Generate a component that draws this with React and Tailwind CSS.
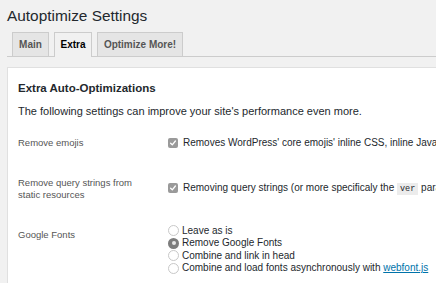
import React from "react";

const Check = () => (
  <span className="inline-flex w-[10px] h-[10px] rounded-[2px] bg-[#9a9a9a] items-center justify-center shrink-0">
    <svg width="8" height="8" viewBox="0 0 8 8">
      <path d="M1.6 4.2 L3.3 5.8 L6.4 2" stroke="white" strokeWidth="1.3" fill="none" strokeLinecap="round" strokeLinejoin="round" />
    </svg>
  </span>
);

const Radio = ({ on }) =>
  on ? (
    <span className="inline-flex w-[11px] h-[11px] rounded-full bg-[#7d7d7d] items-center justify-center shrink-0">
      <span className="w-[4px] h-[4px] rounded-full bg-[#e8e8e8]" />
    </span>
  ) : (
    <span className="inline-block w-[11px] h-[11px] rounded-full border border-[#c8c8c8] bg-white shrink-0" />
  );

export default function App() {
  return (
    <div
      className="w-[436px] h-[283px] overflow-hidden bg-[#f1f1f1] text-[#23282d]"
      style={{ fontFamily: '"Liberation Sans", Arial, sans-serif' }}
    >
      <div className="pl-[7px] pt-[7px] text-[15.4px] leading-[16px] h-[24px] flex items-center">Autoptimize Settings</div>
      <div className="mt-[8px] ml-[7px] pl-[5px] flex gap-[5px] border-b border-[#cccccc] h-[25px] items-end">
        <div className="h-[24px] w-[37px] border border-b-0 border-[#cccccc] bg-[#e5e5e5] text-[#555] text-[10px] font-bold flex items-center justify-center">Main</div>
        <div className="h-[25px] w-[38px] border border-b-0 border-[#cccccc] bg-[#f1f1f1] text-black text-[10px] font-bold flex items-center justify-center -mb-[1px] pb-[1px]">Extra</div>
        <div className="h-[24px] w-[86px] border border-b-0 border-[#cccccc] bg-[#e5e5e5] text-[#555] text-[10px] font-bold flex items-center justify-center">Optimize More!</div>
      </div>
      <div className="mt-[10px] ml-[7px] bg-white border-l border-t border-[#e0e0e0] pl-[10px] h-[300px]">
        <div className="pt-[13px] text-[11.5px] leading-[14px] font-bold text-[#23282d]">Extra Auto-Optimizations</div>
        <div className="mt-[9px] text-[11px] leading-[14px] text-[#23282d] whitespace-nowrap">
          The following settings can improve your site's performance even more.
        </div>
        <div className="mt-[7px] leading-[12px]">
          <div className="flex items-start h-[40px]">
            <div className="w-[150px] shrink-0 pt-[11.5px] text-[9.5px] text-[#555]">Remove emojis</div>
            <div className="pt-[11.5px] flex items-center gap-[5px] whitespace-nowrap text-[10px] text-[#23282d]">
              <Check />
              <span>Removes WordPress' core emojis' inline CSS, inline JavaScript, and an otherwise un-autoptimized JavaScript file.</span>
            </div>
          </div>
          <div className="flex items-start h-[45px]">
            <div className="w-[150px] shrink-0 pt-[11.5px] text-[9.5px] text-[#555]">
              Remove query strings from
              <br />
              static resources
            </div>
            <div className="pt-[16.5px] flex items-center gap-[5px] whitespace-nowrap text-[10px] text-[#23282d]">
              <Check />
              <span>
                Removing query strings (or more specificaly the{" "}
                <code
                  className="bg-[#ececec] px-[3px] py-[1px] text-[8.5px]"
                  style={{ fontFamily: '"Liberation Mono", "Courier New", monospace' }}
                >
                  ver
                </code>{" "}
                parameter) will not improve load time, but might improve performance scores.
              </span>
            </div>
          </div>
          <div className="flex items-start">
            <div className="w-[150px] shrink-0 pt-[18.5px] text-[9.5px] text-[#555]">Google Fonts</div>
            <div className="pt-[14.5px] flex flex-col text-[10px] text-[#23282d] whitespace-nowrap">
              {[
                ["Leave as is", false],
                ["Remove Google Fonts", true],
                ["Combine and link in head", false],
              ].map(([t, on]) => (
                <div key={t} className="h-[12.5px] flex items-center gap-[3px]">
                  <Radio on={on} />
                  <span>{t}</span>
                </div>
              ))}
              <div className="h-[12.5px] flex items-center gap-[3px]">
                <Radio on={false} />
                <span>
                  Combine and load fonts asynchronously with{" "}
                  <span className="text-[#0073aa] underline">webfont.js</span>
                </span>
              </div>
            </div>
          </div>
        </div>
      </div>
    </div>
  );
}
